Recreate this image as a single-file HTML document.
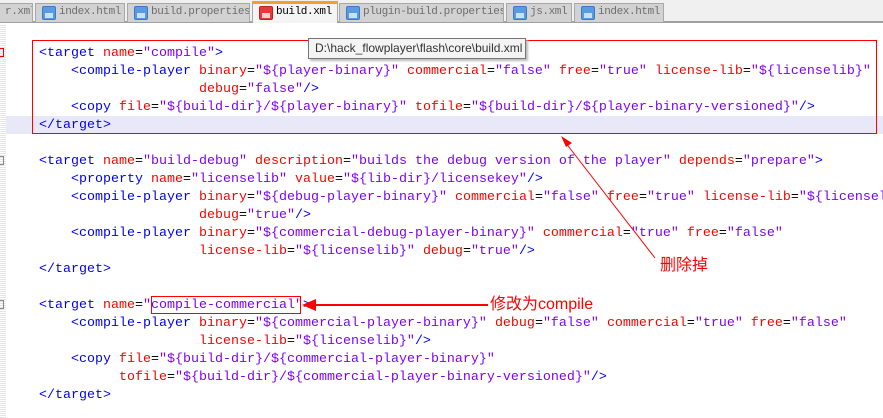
<!DOCTYPE html>
<html><head><meta charset="utf-8"><style>
*{margin:0;padding:0;box-sizing:border-box}
body{width:883px;height:418px;background:#fff;position:relative;overflow:hidden;font-family:"Liberation Mono",monospace}
.tabbar{position:absolute;left:0;top:0;width:883px;height:23px;background:#f0f0f0;border-bottom:2px solid #a0a0a0}
.tab{position:absolute;top:3px;height:19px;background:#d2d2d2;border:1px solid #a8a8a8;border-bottom:none;font-size:11px;color:#6e6e6e;line-height:17px;padding-left:23px;white-space:nowrap;overflow:hidden;letter-spacing:-0.4px}
.tab i{position:absolute;left:6px;top:2px;width:14px;height:14px;background:#5a9ae0;border:1px solid #3a7ac8;border-radius:2px}
.tab i:after{content:"";position:absolute;left:2px;top:6px;width:8px;height:5px;background:#c8e0f8}
.tab.act{top:1px;height:22px;background:#f4f4f4;border-top:3px solid #f0a030;color:#000;line-height:17px}
.tab.act i{background:#e83838;border-color:#c02020}
.tab.act i:after{background:#f8d0d0}
.gut{position:absolute;left:0;top:25px;width:6px;height:393px;background:repeating-linear-gradient(0deg,#e6e6e6 0 1px,#fff 1px 2px)}
.code{position:absolute;left:0;top:45px;font-size:13.33px;line-height:18px;color:#000}
.l{height:18px;padding-left:7px;white-space:pre}
.t{color:#0000ff}.a{color:#ff0000}.v{color:#8000ff}.e{color:#000}
.hl{position:absolute;left:6px;top:116px;width:877px;height:18px;background:#e8e8f8}
.box{position:absolute;border:1px solid #f00}
.tip{position:absolute;left:308px;top:38px;width:218px;height:21px;background:#f4f4f4;border:1px solid #767676;box-shadow:2px 2px 2px #bbb;font-family:"Liberation Sans",sans-serif;font-size:12px;line-height:19px;padding-left:6px;color:#333}
.ann{position:absolute;color:#f00;font-family:"Liberation Sans","Noto Sans CJK SC",sans-serif;font-size:16px;line-height:18px}
.fold{position:absolute;left:0;width:4px;height:9px;border:1px solid #888;border-left:none}
</style></head><body>
<div class="tabbar">
<div class="tab" style="left:-10px;width:43px;padding-left:14px">r.xml</div>
<div class="tab" style="left:35px;width:90px"><i></i>index.html</div>
<div class="tab" style="left:127px;width:123px"><i></i>build.properties</div>
<div class="tab act" style="left:252px;width:86px"><i></i>build.xml</div>
<div class="tab" style="left:339px;width:165px"><i></i>plugin-build.properties</div>
<div class="tab" style="left:506px;width:66px"><i></i>js.xml</div>
<div class="tab" style="left:574px;width:90px"><i></i>index.html</div>
</div>
<div class="gut"></div>
<div class="hl"></div>
<div class="fold" style="top:48px;border-color:#f00"></div>
<div class="fold" style="top:156px"></div>
<div class="fold" style="top:300px"></div>
<div class="code"><div class="l">    <span class="t">&lt;target</span> <span class="a">name</span><span class="e">=</span><span class="v">"compile"</span><span class="t">&gt;</span></div><div class="l">        <span class="t">&lt;compile-player</span> <span class="a">binary</span>=<span class="v">"${player-binary}"</span> <span class="a">commercial</span>=<span class="v">"false"</span> <span class="a">free</span>=<span class="v">"true"</span> <span class="a">license-lib</span>=<span class="v">"${licenselib}"</span></div><div class="l">                        <span class="a">debug</span>=<span class="v">"false"</span><span class="t">/&gt;</span></div><div class="l">        <span class="t">&lt;copy</span> <span class="a">file</span>=<span class="v">"${build-dir}/${player-binary}"</span> <span class="a">tofile</span>=<span class="v">"${build-dir}/${player-binary-versioned}"</span><span class="t">/&gt;</span></div><div class="l">    <span class="t">&lt;/target&gt;</span></div><div class="l"> </div><div class="l">    <span class="t">&lt;target</span> <span class="a">name</span>=<span class="v">"build-debug"</span> <span class="a">description</span>=<span class="v">"builds the debug version of the player"</span> <span class="a">depends</span>=<span class="v">"prepare"</span><span class="t">&gt;</span></div><div class="l">        <span class="t">&lt;property</span> <span class="a">name</span>=<span class="v">"licenselib"</span> <span class="a">value</span>=<span class="v">"${lib-dir}/licensekey"</span><span class="t">/&gt;</span></div><div class="l">        <span class="t">&lt;compile-player</span> <span class="a">binary</span>=<span class="v">"${debug-player-binary}"</span> <span class="a">commercial</span>=<span class="v">"false"</span> <span class="a">free</span>=<span class="v">"true"</span> <span class="a">license-lib</span>=<span class="v">"${licenselib}"</span></div><div class="l">                        <span class="a">debug</span>=<span class="v">"true"</span><span class="t">/&gt;</span></div><div class="l">        <span class="t">&lt;compile-player</span> <span class="a">binary</span>=<span class="v">"${commercial-debug-player-binary}"</span> <span class="a">commercial</span>=<span class="v">"true"</span> <span class="a">free</span>=<span class="v">"false"</span></div><div class="l">                        <span class="a">license-lib</span>=<span class="v">"${licenselib}"</span> <span class="a">debug</span>=<span class="v">"true"</span><span class="t">/&gt;</span></div><div class="l">    <span class="t">&lt;/target&gt;</span></div><div class="l"> </div><div class="l">    <span class="t">&lt;target</span> <span class="a">name</span>=<span class="v">"compile-commercial"</span><span class="t">&gt;</span></div><div class="l">        <span class="t">&lt;compile-player</span> <span class="a">binary</span>=<span class="v">"${commercial-player-binary}"</span> <span class="a">debug</span>=<span class="v">"false"</span> <span class="a">commercial</span>=<span class="v">"true"</span> <span class="a">free</span>=<span class="v">"false"</span></div><div class="l">                        <span class="a">license-lib</span>=<span class="v">"${licenselib}"</span><span class="t">/&gt;</span></div><div class="l">        <span class="t">&lt;copy</span> <span class="a">file</span>=<span class="v">"${build-dir}/${commercial-player-binary}"</span></div><div class="l">              <span class="a">tofile</span>=<span class="v">"${build-dir}/${commercial-player-binary-versioned}"</span><span class="t">/&gt;</span></div><div class="l">    <span class="t">&lt;/target&gt;</span></div></div>
<div class="box" style="left:32px;top:40px;width:845px;height:94px"></div>
<div class="box" style="left:151px;top:296px;width:150px;height:18px"></div>
<div class="tip">D:\hack_flowplayer\flash\core\build.xml</div>
<svg style="position:absolute;left:0;top:0" width="883" height="418">
<line x1="655" y1="258" x2="565" y2="142" stroke="#f00" stroke-width="1"/>
<polygon points="561,136 572,143 566,147" fill="#f00"/>
<line x1="488" y1="305" x2="312" y2="305" stroke="#f00" stroke-width="2"/>
<polygon points="302,305 316,299 316,311" fill="#f00"/>
</svg>
<div class="ann" style="left:660px;top:257px">删除掉</div>
<div class="ann" style="left:490px;top:296px">修改为compile</div>
</body></html>
